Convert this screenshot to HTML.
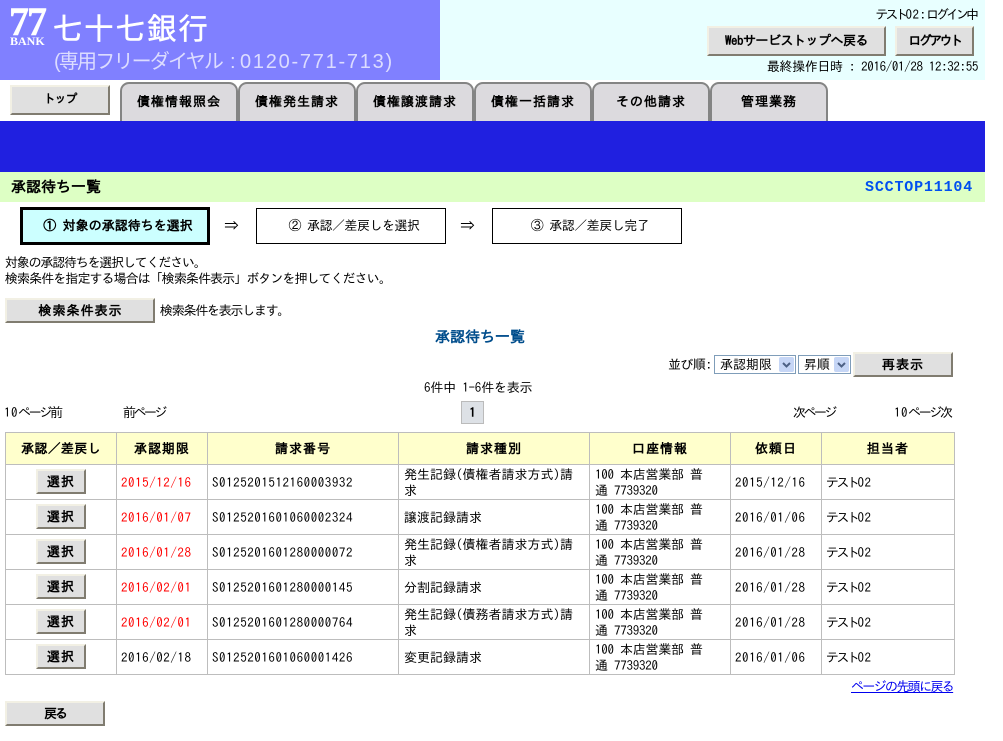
<!DOCTYPE html>
<html lang="ja"><head><meta charset="utf-8"><title>承認待ち一覧</title>
<style>
html,body{margin:0;padding:0;background:#fff}
body{position:relative;width:1003px;height:741px;overflow:hidden;font:13px/13px "IPAGothic","Noto Sans CJK JP",sans-serif;color:#000}
.a{position:absolute;white-space:nowrap}
.btn{position:absolute;box-sizing:border-box;background:#e0e0e0;border:2px solid;border-color:#f2f0e4 #807c70 #807c70 #f2f0e4;text-align:center;font-weight:bold;color:#000;white-space:nowrap;letter-spacing:1px}
.tab{position:absolute;top:82px;height:39px;width:118px;box-sizing:border-box;background:#dcdade;border:2px solid #848484;border-bottom:0;border-radius:9px 9px 0 0;text-align:center;font-weight:bold;line-height:35px;letter-spacing:1px}
.step{position:absolute;box-sizing:border-box;top:208px;height:36px;border:1px solid #000;text-align:center;line-height:34px;background:#fff;letter-spacing:-.5px;padding-left:6px}
table{position:absolute;left:5px;top:432px;border-collapse:collapse;table-layout:fixed;width:949px}
td,th{border:1px solid #bdbdbd;padding:1px 5px 0;height:34px;box-sizing:border-box;line-height:16px;text-align:left;font-weight:normal;overflow:hidden}
th{background:#ffffcc;text-align:center;font-weight:bold;height:32px;padding-top:0;letter-spacing:1px}
th:first-child{letter-spacing:.3px}
tr.r td{height:35px}
tr.r td:nth-child(2),tr.r td:nth-child(3),tr.r td:nth-child(6){letter-spacing:.55px;padding-left:4px}
tr.r td:nth-child(5){letter-spacing:-.25px}
tr.r td:nth-child(7){padding-left:4px}
.k{letter-spacing:-2.5px}
.n{letter-spacing:.5px}
.red{color:#f00}
.sel{position:relative;top:-1px;display:block;margin:0 auto;width:50px;height:25px;line-height:21px;box-sizing:border-box;background:#e0e0e0;border:2px solid;border-color:#f2f0e4 #807c70 #807c70 #f2f0e4;text-align:center;font-weight:bold;letter-spacing:1px}
.select{position:absolute;box-sizing:border-box;top:355px;height:19px;background:#fff;border:1px solid #7f9db9;line-height:17px;padding-left:5px}
.arr{position:absolute;right:1px;top:1px;width:15px;height:15px;background:#c6d6f6;border-radius:2px}
</style></head>
<body>
<div class="a" style="left:0;top:0;width:985px;height:80px;background:#e8ffff"></div>
<div class="a" style="left:0;top:0;width:440px;height:80px;background:#8080ff"></div>
<div class="a" style="left:9px;top:4px;font:bold 40px/36px 'Liberation Serif',serif;color:#fff;letter-spacing:-2px;-webkit-text-stroke:.4px #fff">77</div>
<div class="a" style="left:10px;top:35px;font:bold 12px/12px 'Liberation Serif',serif;color:#fff">BANK</div>
<div class="a" style="left:53px;top:11px;font:29px/32px 'Noto Sans CJK JP',sans-serif;color:#fff;letter-spacing:2.4px;-webkit-text-stroke:.5px #fff">七十七銀行</div>
<div class="a" style="left:54px;top:50px;font:20px/24px 'Liberation Sans','Noto Sans CJK JP',sans-serif;color:#dcdcff;letter-spacing:-1.8px">(専用フリーダイヤル</div>
<div class="a" style="left:230px;top:50px;font:20px/24px 'Liberation Sans','Noto Sans CJK JP',sans-serif;color:#dcdcff">:</div>
<div class="a" style="left:240px;top:50px;font:20px/24px 'Liberation Sans','Noto Sans CJK JP',sans-serif;color:#dcdcff;letter-spacing:1.75px">0120-771-713)</div>

<div class="a" style="right:24px;top:8px;line-height:13px"><span style="letter-spacing:-3px">テスト</span><span class="n">O2</span>:<span style="letter-spacing:-3px">ログイン</span>中</div>
<div class="btn" style="left:707px;top:26px;width:179px;height:30px;line-height:26px;letter-spacing:-.5px">Webサービストップへ戻る</div>
<div class="btn" style="left:895px;top:26px;width:79px;height:30px;line-height:26px;letter-spacing:-2.5px">ログアウト</div>
<div class="a" style="right:25px;top:60px;letter-spacing:-.35px">最終操作日時 : 2016/01/28 12:32:55</div>

<div class="btn" style="left:10px;top:85px;width:100px;height:30px;line-height:24px;font-size:12px;letter-spacing:-1px">トップ</div>
<div class="tab" style="left:120px">債権情報照会</div>
<div class="tab" style="left:238px">債権発生請求</div>
<div class="tab" style="left:356px">債権譲渡請求</div>
<div class="tab" style="left:474px">債権一括請求</div>
<div class="tab" style="left:592px">その他請求</div>
<div class="tab" style="left:710px">管理業務</div>

<div class="a" style="left:0;top:121px;width:985px;height:50px;background:#2020e0"></div>
<div class="a" style="left:0;top:171px;width:985px;height:31px;background:#ddffc4;border-top:1px solid #2020e0;box-sizing:border-box"></div>
<div class="a" style="left:11px;top:179px;font-weight:bold;font-size:15px;line-height:15px">承認待ち一覧</div>
<div class="a" style="left:865px;top:180px;font:bold 15px/15px 'Liberation Mono',monospace;color:#0050f0;letter-spacing:.82px">SCCTOP11104</div>

<div class="step" style="left:20px;width:190px;height:38px;top:207px;border:3px solid #000;background:#ccffff;font-weight:bold;line-height:32px;letter-spacing:0">① 対象の承認待ちを選択</div>
<div class="a" style="left:224px;top:218px;font-size:15px;line-height:15px">⇒</div>
<div class="step" style="left:256px;width:190px">② 承認／差戻しを選択</div>
<div class="a" style="left:460px;top:218px;font-size:15px;line-height:15px">⇒</div>
<div class="step" style="left:492px;width:190px">③ 承認／差戻し完了</div>

<div class="a" style="left:5px;top:256px;letter-spacing:-1.2px">対象の承認待ちを選択してください。</div>
<div class="a" style="left:5px;top:272px;letter-spacing:-.94px">検索条件を指定する場合は「検索条件表示」ボタンを押してください。</div>
<div class="btn" style="left:5px;top:298px;width:150px;height:25px;line-height:22px;padding-left:1px">検索条件表示</div>
<div class="a" style="left:160px;top:304px;letter-spacing:-1.27px">検索条件を表示します。</div>

<div class="a" style="left:435px;top:329px;font-weight:bold;color:#004d8c;font-size:15px;line-height:15px">承認待ち一覧</div>

<div class="a" style="left:668px;top:358px;letter-spacing:-.5px">並び順:</div>
<div class="select" style="left:714px;width:82px">承認期限<span class="arr"><svg width="15" height="15"><path d="M4 6l3.500 3.500L11 6" fill="none" stroke="#4d6185" stroke-width="2"/></svg></span></div>
<div class="select" style="left:798px;width:53px">昇順<span class="arr"><svg width="15" height="15"><path d="M4 6l3.500 3.500L11 6" fill="none" stroke="#4d6185" stroke-width="2"/></svg></span></div>
<div class="btn" style="left:853px;top:352px;width:100px;height:25px;line-height:22px">再表示</div>

<div class="a" style="left:424px;top:381px;letter-spacing:-.2px">6件中 1-6件を表示</div>
<div class="a" style="left:4px;top:406px"><span class="n">10</span><span style="letter-spacing:-2.3px">ページ</span>前</div>
<div class="a" style="left:123px;top:406px;letter-spacing:-2.5px">前ページ</div>
<div class="a" style="left:461px;top:401px;width:23px;height:23px;box-sizing:border-box;background:#dde1e6;border:1px solid #bbb;text-align:center;font-weight:bold;line-height:21px">1</div>
<div class="a" style="left:793px;top:406px;letter-spacing:-2.5px">次ページ</div>
<div class="a" style="left:894px;top:406px"><span class="n">10</span><span style="letter-spacing:-2.3px">ページ</span>次</div>

<table>
<colgroup><col style="width:111px"><col style="width:91px"><col style="width:191px"><col style="width:191px"><col style="width:141px"><col style="width:91px"><col style="width:133px"></colgroup>
<tr><th>承認／差戻し</th><th>承認期限</th><th>請求番号</th><th>請求種別</th><th>口座情報</th><th>依頼日</th><th>担当者</th></tr>
<tr class="r"><td><span class="sel">選択</span></td><td class="red">2015/12/16</td><td>S0125201512160003932</td><td>発生記録(債権者請求方式)請<br>求</td><td>100 本店営業部 普<br>通 7739320</td><td>2015/12/16</td><td><span class="k">テスト</span><span class="n">O2</span></td></tr>
<tr class="r"><td><span class="sel">選択</span></td><td class="red">2016/01/07</td><td>S0125201601060002324</td><td>譲渡記録請求</td><td>100 本店営業部 普<br>通 7739320</td><td>2016/01/06</td><td><span class="k">テスト</span><span class="n">O2</span></td></tr>
<tr class="r"><td><span class="sel">選択</span></td><td class="red">2016/01/28</td><td>S0125201601280000072</td><td>発生記録(債権者請求方式)請<br>求</td><td>100 本店営業部 普<br>通 7739320</td><td>2016/01/28</td><td><span class="k">テスト</span><span class="n">O2</span></td></tr>
<tr class="r"><td><span class="sel">選択</span></td><td class="red">2016/02/01</td><td>S0125201601280000145</td><td>分割記録請求</td><td>100 本店営業部 普<br>通 7739320</td><td>2016/01/28</td><td><span class="k">テスト</span><span class="n">O2</span></td></tr>
<tr class="r"><td><span class="sel">選択</span></td><td class="red">2016/02/01</td><td>S0125201601280000764</td><td>発生記録(債務者請求方式)請<br>求</td><td>100 本店営業部 普<br>通 7739320</td><td>2016/01/28</td><td><span class="k">テスト</span><span class="n">O2</span></td></tr>
<tr class="r"><td><span class="sel">選択</span></td><td>2016/02/18</td><td>S0125201601060001426</td><td>変更記録請求</td><td>100 本店営業部 普<br>通 7739320</td><td>2016/01/06</td><td><span class="k">テスト</span><span class="n">O2</span></td></tr>
</table>

<div class="a" style="left:851px;top:680px;color:#0000ee;text-decoration:underline;letter-spacing:-1.65px">ページの先頭に戻る</div>
<div class="btn" style="left:5px;top:701px;width:100px;height:25px;line-height:22px;letter-spacing:-2px">戻る</div>
</body></html>
